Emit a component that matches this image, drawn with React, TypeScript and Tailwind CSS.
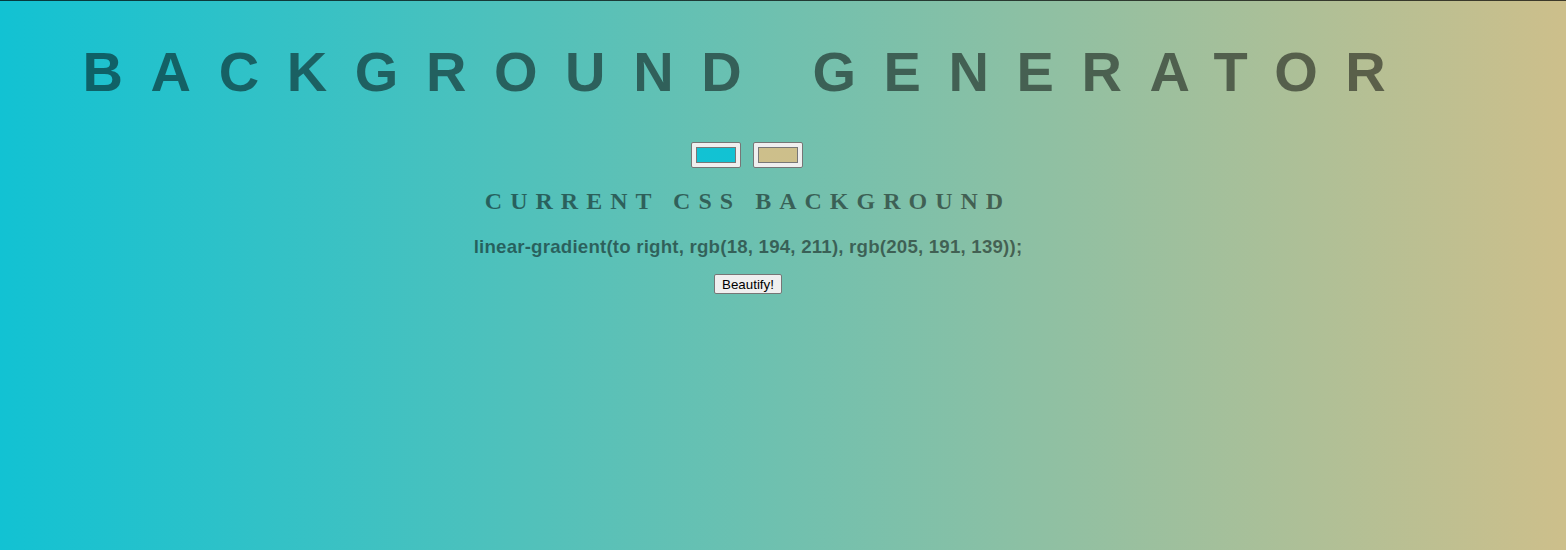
import React from "react";

function Swatch({ color }: { color: string }) {
  return (
    <div className="w-[50px] h-[26px] bg-[#efefef] border border-[#767676] rounded-[2px] px-[4px] py-[4px] flex">
      <div className="flex-1 border border-[#777777]" style={{ backgroundColor: color }} />
    </div>
  );
}

export default function App() {
  return (
    <div
      className="w-full h-[550px] border-t border-black/70 bg-[linear-gradient(to_right,rgb(18,194,211),rgb(205,191,139))] overflow-hidden"
    >
      <div className="w-[1496px] flex flex-col items-center text-center">
        <h1 className="mt-[39px] text-[56px] leading-[64px] font-bold tracking-[27.6px] text-black/50 font-['Liberation_Sans',Arial,sans-serif] whitespace-nowrap">
          BACKGROUND GENERATOR
        </h1>
        <div className="mt-[38px] flex gap-[12px] pr-[2px]">
          <Swatch color="#12c2d3" />
          <Swatch color="#cdbf8b" />
        </div>
        <h2 className="mt-[19px] text-[24px] leading-[28px] font-bold tracking-[8px] text-black/50 font-['Liberation_Serif','Times_New_Roman',serif] whitespace-nowrap">
          CURRENT CSS BACKGROUND
        </h2>
        <h3 className="mt-[21px] text-[18.72px] leading-[21px] font-black tracking-[0.19px] text-black/50 font-['Liberation_Sans',Arial,sans-serif] whitespace-nowrap">
          linear-gradient(to right, rgb(18, 194, 211), rgb(205, 191, 139));
        </h3>
        <button className="mt-[17px] h-[20px] px-[7px] bg-[#efefef] border border-[#767676] rounded-[2px] text-[13.33px] leading-[15px] text-black font-['Liberation_Sans',Arial,sans-serif]">
          Beautify!
        </button>
      </div>
    </div>
  );
}
